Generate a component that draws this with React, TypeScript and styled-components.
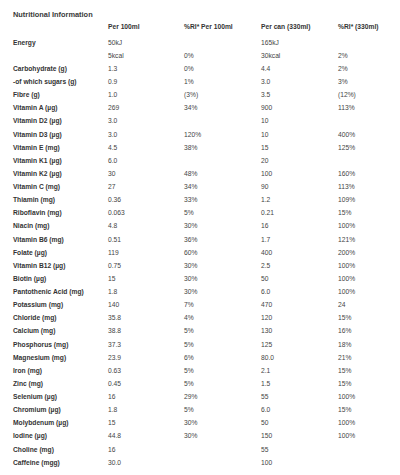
import React from "react";
import styled, { createGlobalStyle } from "styled-components";

const Global = createGlobalStyle`
  html, body { margin: 0; padding: 0; background: #fff; }
  body { font-family: "Liberation Sans", Arial, sans-serif; color: #333; }
`;

const Wrap = styled.div`
  padding: 10px 0 0 13px;
  width: 387px;
  box-sizing: border-box;
`;

const Title = styled.h2`
  margin: 0;
  font-size: 7.4px;
  line-height: 9px;
  font-weight: 700;
  color: #3a3a3a;
  height: 9px;
`;

const Grid = styled.div`
  display: grid;
  grid-template-columns: 95px 76px 77px 77px 1fr;
  margin-top: 2px;
`;

const Cell = styled.div<{ $bold?: boolean; $head?: boolean }>`
  font-size: 6.7px;
  font-weight: ${(p) => (p.$bold ? 700 : 400)};
  height: ${(p) => (p.$head ? "14.7px" : "13.125px")};
  line-height: ${(p) => (p.$head ? "14.7px" : "13.125px")};
  white-space: nowrap;
  color: ${(p) => (p.$bold ? "#333" : "#444")};
  transform: ${(p) => (p.$head ? "translateY(-1px)" : "none")};
`;

const head = ["", "Per 100ml", "%RI* Per 100ml", "Per can (330ml)", "%RI* (330ml)"];

const rows: string[][] = [
  ["Energy", "50kJ", "", "165kJ", ""],
  ["", "5kcal", "0%", "30kcal", "2%"],
  ["Carbohydrate (g)", "1.3", "0%", "4.4", "2%"],
  ["-of which sugars (g)", "0.9", "1%", "3.0", "3%"],
  ["Fibre (g)", "1.0", "(3%)", "3.5", "(12%)"],
  ["Vitamin A (µg)", "269", "34%", "900", "113%"],
  ["Vitamin D2 (µg)", "3.0", "", "10", ""],
  ["Vitamin D3 (µg)", "3.0", "120%", "10", "400%"],
  ["Vitamin E (mg)", "4.5", "38%", "15", "125%"],
  ["Vitamin K1 (µg)", "6.0", "", "20", ""],
  ["Vitamin K2 (µg)", "30", "48%", "100", "160%"],
  ["Vitamin C (mg)", "27", "34%", "90", "113%"],
  ["Thiamin (mg)", "0.36", "33%", "1.2", "109%"],
  ["Riboflavin (mg)", "0.063", "5%", "0.21", "15%"],
  ["Niacin (mg)", "4.8", "30%", "16", "100%"],
  ["Vitamin B6 (mg)", "0.51", "36%", "1.7", "121%"],
  ["Folate (µg)", "119", "60%", "400", "200%"],
  ["Vitamin B12 (µg)", "0.75", "30%", "2.5", "100%"],
  ["Biotin (µg)", "15", "30%", "50", "100%"],
  ["Pantothenic Acid (mg)", "1.8", "30%", "6.0", "100%"],
  ["Potassium (mg)", "140", "7%", "470", "24"],
  ["Chloride (mg)", "35.8", "4%", "120", "15%"],
  ["Calcium (mg)", "38.8", "5%", "130", "16%"],
  ["Phosphorus (mg)", "37.3", "5%", "125", "18%"],
  ["Magnesium (mg)", "23.9", "6%", "80.0", "21%"],
  ["Iron (mg)", "0.63", "5%", "2.1", "15%"],
  ["Zinc (mg)", "0.45", "5%", "1.5", "15%"],
  ["Selenium (µg)", "16", "29%", "55", "100%"],
  ["Chromium (µg)", "1.8", "5%", "6.0", "15%"],
  ["Molybdenum (µg)", "15", "30%", "50", "100%"],
  ["Iodine (µg)", "44.8", "30%", "150", "100%"],
  ["Choline (mg)", "16", "", "55", ""],
  ["Caffeine (mgg)", "30.0", "", "100", ""],
];

export default function App() {
  return (
    <>
      <Global />
      <Wrap>
        <Title>Nutritional Information</Title>
        <Grid>
          {head.map((h, i) => (
            <Cell key={"h" + i} $head $bold>
              {h}
            </Cell>
          ))}
          {rows.map((r, ri) =>
            r.map((c, ci) => (
              <Cell key={ri + "-" + ci} $bold={ci === 0}>
                {c}
              </Cell>
            ))
          )}
        </Grid>
      </Wrap>
    </>
  );
}
